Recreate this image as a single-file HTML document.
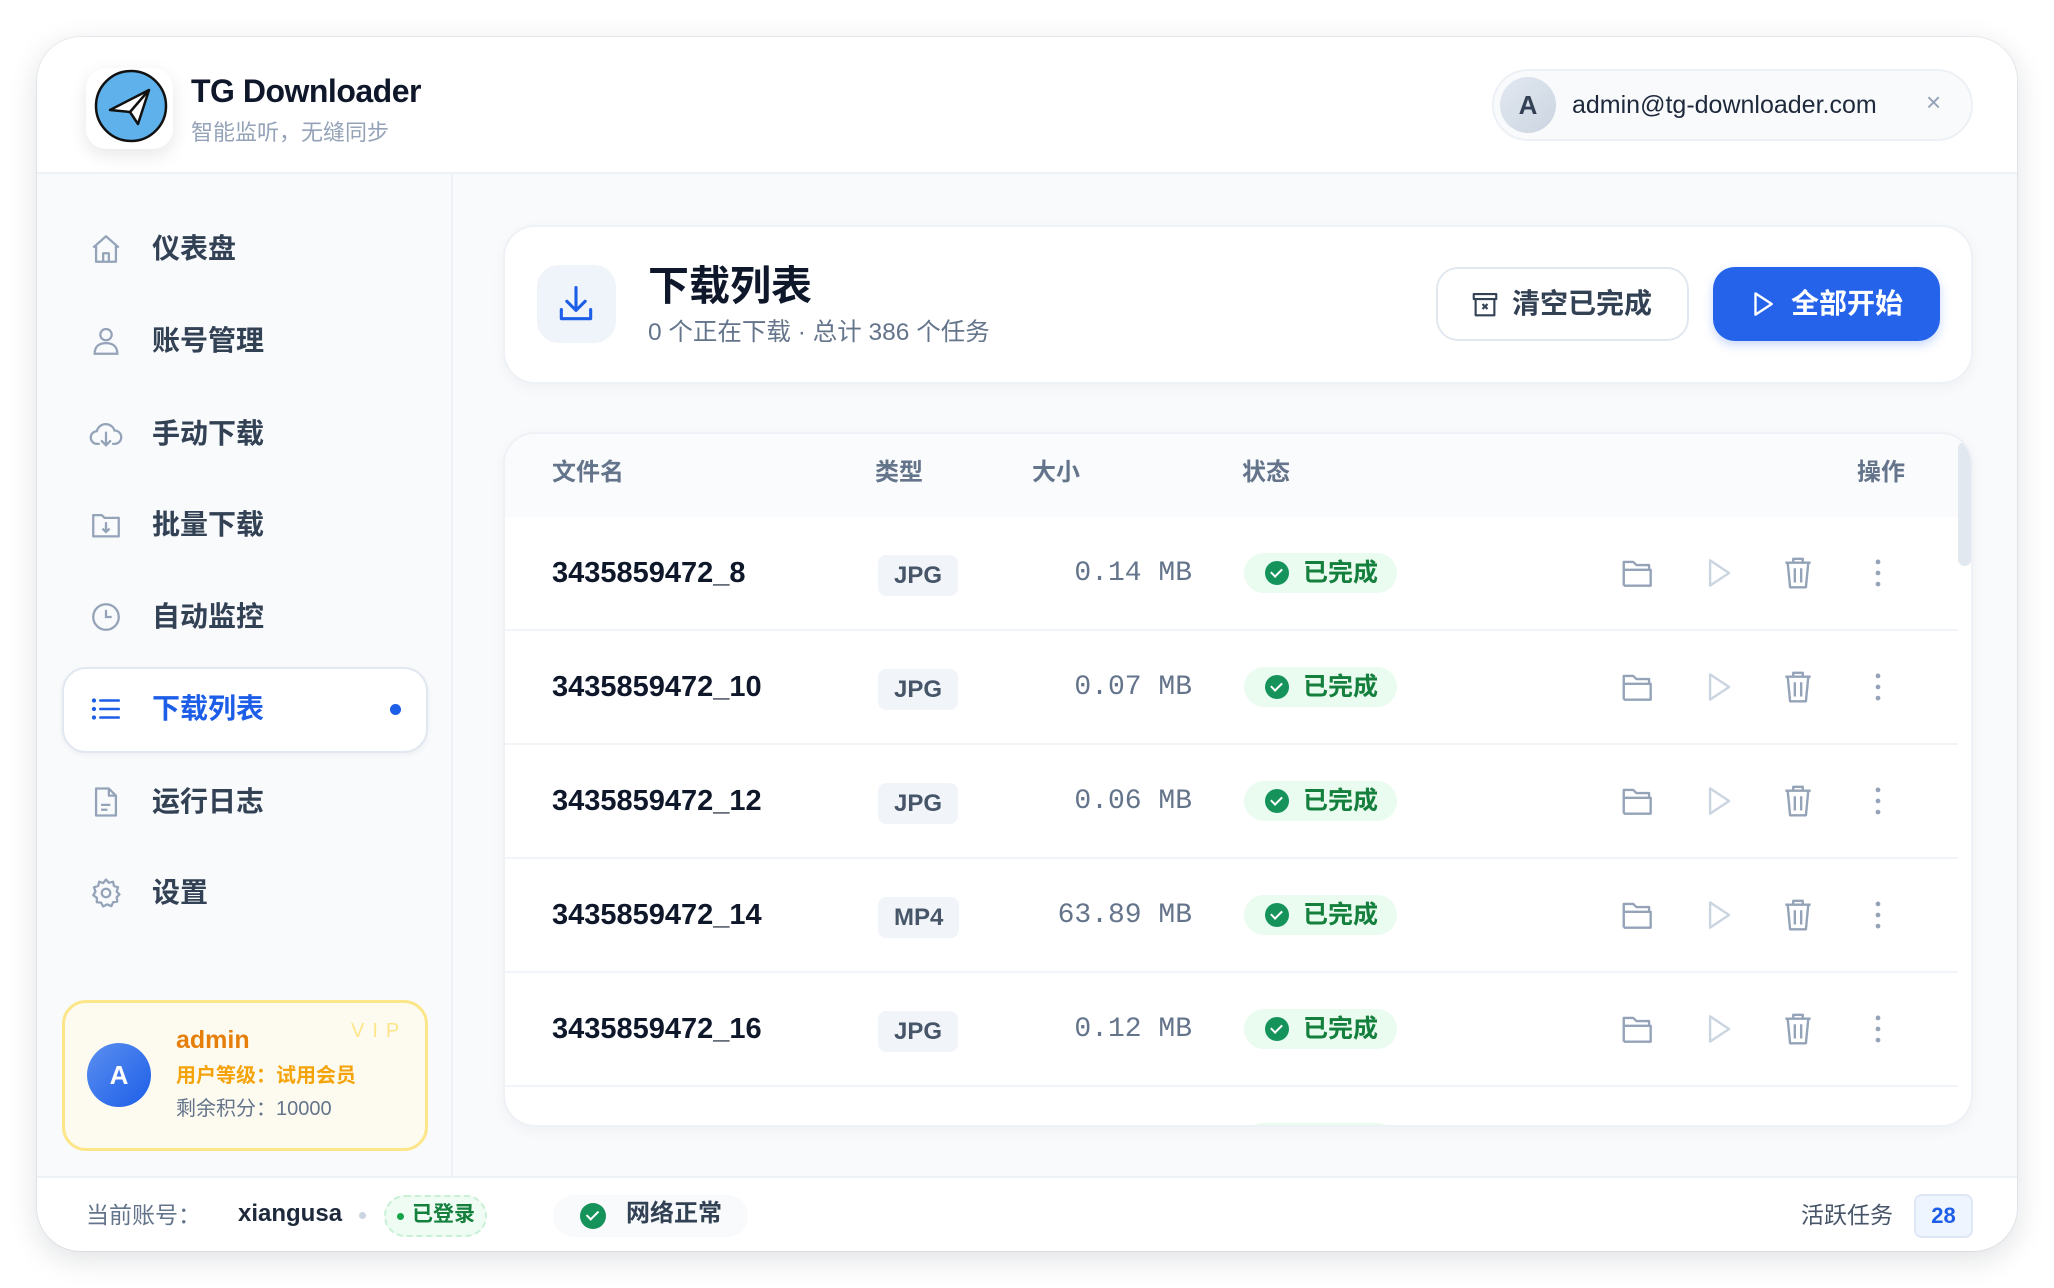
<!DOCTYPE html>
<html><head><meta charset="utf-8">
<style>
*{margin:0;padding:0;box-sizing:border-box}
body{width:2054px;height:1288px;background:#fff;position:relative;overflow:hidden;font-family:"Liberation Sans","Noto Sans CJK SC",sans-serif;color:#0f172a}
.abs{position:absolute}
.win{left:37px;top:37px;width:1980px;height:1214px;border-radius:44px;background:#f8fafc;box-shadow:0 8px 30px rgba(15,23,42,.13),0 0 0 1px #eef1f5;overflow:hidden}
.hdr{left:0;top:0;width:1980px;height:137px;background:#fff;border-bottom:2px solid #eef1f5}
.side{left:0;top:137px;width:416px;height:1002px;background:#f8fafc;border-right:2px solid #eef1f5}
.nav{position:absolute;left:0;width:416px;height:60px;display:flex;align-items:center}
.nav svg{position:absolute;left:52px;width:34px;height:34px}
.nav span{position:absolute;left:115px;font-size:28px;font-weight:700;color:#334155;line-height:1}
.foot{left:0;top:1139px;width:1980px;height:75px;background:#fff;border-top:2px solid #eef1f5}
.card{background:#fff;border:2px solid #eef1f5;border-radius:32px;box-shadow:0 4px 14px rgba(15,23,42,.04)}
.th{position:absolute;top:423px;font-size:24px;font-weight:700;color:#64748b;line-height:26px}
.row{position:absolute;left:0;width:1453px;height:114px;border-bottom:2px solid #f1f4f8}
.fn{position:absolute;left:47px;top:40px;font-size:29px;font-weight:600;color:#0f172a;line-height:32px}
.badge{position:absolute;left:373px;top:38px;height:41px;padding:0 16px;background:#f1f5f9;border-radius:8px;font-size:24px;font-weight:600;color:#475569;line-height:41px}
.sz{position:absolute;right:766px;top:40px;font-family:"Liberation Mono",monospace;font-size:28px;color:#64748b;line-height:34px}
.st{position:absolute;left:739px;top:36px;width:153px;height:40px;border-radius:20px;background:#eafbf0}
.st i{position:absolute;left:21px;top:8px;width:24px;height:24px;border-radius:50%;background:#15935a}
.st i:after{content:"";position:absolute;left:8px;top:5px;width:5px;height:9px;border:solid #fff;border-width:0 2px 2px 0;transform:rotate(45deg)}
.st span{position:absolute;left:59px;top:6px;font-size:25px;font-weight:600;color:#15803d;line-height:28px}
.ic{position:absolute;top:37px;width:38px;height:38px}
</style></head><body>
<div class="abs win">
 <div class="abs hdr">
  <div class="abs" style="left:49px;top:31px;width:87px;height:81px;background:#fff;border-radius:20px;box-shadow:0 6px 18px rgba(15,23,42,.1)"></div>
  <svg class="abs" style="left:56px;top:31px" width="76" height="76" viewBox="0 0 76 76"><circle cx="38" cy="38" r="35" fill="#5eb1ea" stroke="#111" stroke-width="2.5"/><path d="M17 42 L56 22 L45 56 L37 44 Z" fill="#fff" stroke="#111" stroke-width="2.5" stroke-linejoin="round"/><path d="M37 44 L56 22" stroke="#111" stroke-width="2.5"/></svg>
  <div class="abs" style="left:154px;top:36px;font-size:32px;font-weight:700;letter-spacing:-0.5px;color:#0f172a">TG Downloader</div>
  <div class="abs" style="left:154px;top:78px;font-size:22px;color:#94a3b8">智能监听，无缝同步</div>
  <div class="abs" style="left:1455px;top:32px;width:481px;height:72px;border-radius:36px;background:#f8fafc;border:2px solid #edf1f6"></div>
  <div class="abs" style="left:1463px;top:40px;width:56px;height:56px;border-radius:50%;background:linear-gradient(135deg,#e2e8f0,#cbd5e1);text-align:center;line-height:56px;font-size:26px;font-weight:700;color:#334155">A</div>
  <div class="abs" style="left:1535px;top:54px;font-size:25px;color:#1e293b;line-height:28px">admin@tg-downloader.com</div>
  <div class="abs" style="left:1889px;top:50px;font-size:26px;color:#94a3b8">×</div>
 </div>
 <div class="abs side">
  <div class="nav" style="top:45px"><svg viewBox="0 0 24 24" fill="none" stroke="#94a3b8" stroke-width="1.6" stroke-linejoin="round"><path d="M3 11 L12 3 L21 11 M5 9.5 V21 H19 V9.5 M10 21 V15 H14 V21"/></svg><span>仪表盘</span></div>
  <div class="nav" style="top:137px"><svg viewBox="0 0 24 24" fill="none" stroke="#94a3b8" stroke-width="1.6"><circle cx="12" cy="7.5" r="4"/><path d="M4 21 C4 15 8 13.5 12 13.5 C16 13.5 20 15 20 21 Z"/></svg><span>账号管理</span></div>
  <div class="nav" style="top:230px"><svg viewBox="0 0 24 24" fill="none" stroke="#94a3b8" stroke-width="1.6" stroke-linecap="round"><path d="M7 19 H6 A4.5 4.5 0 0 1 5.5 10 A6.5 6.5 0 0 1 18 9.5 A4.5 4.5 0 0 1 18 19 H17"/><path d="M12 11 V20 M9 17 L12 20 L15 17"/></svg><span>手动下载</span></div>
  <div class="nav" style="top:321px"><svg viewBox="0 0 24 24" fill="none" stroke="#94a3b8" stroke-width="1.6" stroke-linejoin="round"><path d="M3 5 H9 L11 7 H21 V20 H3 Z"/><path d="M12 10 V17 M9.5 14.5 L12 17 L14.5 14.5"/></svg><span>批量下载</span></div>
  <div class="nav" style="top:413px"><svg viewBox="0 0 24 24" fill="none" stroke="#94a3b8" stroke-width="1.6"><circle cx="12" cy="12" r="9"/><path d="M12 7 V12 H16"/></svg><span>自动监控</span></div>
  <div class="abs" style="left:25px;top:493px;width:366px;height:86px;background:#fff;border:2px solid #e2e8f0;border-radius:24px;box-shadow:0 2px 6px rgba(15,23,42,.05)"></div>
  <div class="nav" style="top:505px"><svg viewBox="0 0 24 24" fill="none" stroke="#1d5ee8" stroke-width="1.8" stroke-linecap="round"><path d="M8 6 H21 M8 12 H21 M8 18 H21"/><circle cx="3.5" cy="6" r=".6" fill="#1d5ee8"/><circle cx="3.5" cy="12" r=".6" fill="#1d5ee8"/><circle cx="3.5" cy="18" r=".6" fill="#1d5ee8"/></svg><span style="color:#1d5ee8">下载列表</span><div class="abs" style="left:353px;top:25px;width:11px;height:11px;border-radius:50%;background:#1d5ee8"></div></div>
  <div class="nav" style="top:598px"><svg viewBox="0 0 24 24" fill="none" stroke="#94a3b8" stroke-width="1.6" stroke-linejoin="round"><path d="M5 2.5 H14 L19 7.5 V21.5 H5 Z M14 2.5 V7.5 H19 M8.5 14 H15 M8.5 17.5 H13"/></svg><span>运行日志</span></div>
  <div class="nav" style="top:689px"><svg viewBox="0 0 24 24" fill="none" stroke="#94a3b8" stroke-width="1.6"><circle cx="12" cy="12" r="3"/><path d="M12 2.5 L14 4.8 L17 4 L17.6 7 L20.5 8 L19.5 11 L21.5 13 L19.5 15 L20 18 L17 18.5 L15.8 21.3 L12.8 20 L10 21.5 L8.5 18.8 L5.5 18.5 L5.6 15.5 L3 13.5 L4.6 11 L3.5 8 L6.5 7 L7.2 4 L10 5 Z" stroke-linejoin="round"/></svg><span>设置</span></div>
  <div class="abs" style="left:25px;top:826px;width:366px;height:151px;background:#fdfbf0;border:3px solid #fde68a;border-radius:24px"></div>
  <div class="abs" style="left:50px;top:869px;width:64px;height:64px;border-radius:50%;background:linear-gradient(135deg,#5b8ff0,#1d5ee8);color:#fff;font-size:26px;font-weight:700;text-align:center;line-height:64px">A</div>
  <div class="abs" style="left:139px;top:851px;font-size:25px;font-weight:600;color:#e67e0a;line-height:30px">admin</div>
  <div class="abs" style="left:314px;top:846px;font-size:20px;color:#fde68a;letter-spacing:8px">VIP</div>
  <div class="abs" style="left:139px;top:890px;font-size:20px;font-weight:700;color:#f5a30b;line-height:24px">用户等级：试用会员</div>
  <div class="abs" style="left:139px;top:923px;font-size:20px;color:#64748b;line-height:24px">剩余积分：10000</div>
 </div>
 <div class="abs card" style="left:466px;top:188px;width:1470px;height:159px"></div>
 <div class="abs" style="left:500px;top:228px;width:79px;height:78px;border-radius:22px;background:#eff4fa"></div>
 <svg class="abs" style="left:517px;top:245px" width="44" height="44" viewBox="0 0 24 24" fill="none" stroke="#1d5ee8" stroke-width="1.7" stroke-linecap="round" stroke-linejoin="round"><path d="M12 3 V15 M7 10.5 L12 15.5 L17 10.5 M4 15 V20 H20 V15"/></svg>
 <div class="abs" style="left:611px;top:225px;font-size:41px;font-weight:700;color:#0f172a;line-height:48px">下载列表</div>
 <div class="abs" style="left:611px;top:281px;font-size:24.5px;color:#64748b;line-height:30px">0 个正在下载 · 总计 386 个任务</div>
 <div class="abs" style="left:1399px;top:230px;width:253px;height:74px;border:2px solid #e2e8f0;border-radius:22px;background:#fff"></div>
 <svg class="abs" style="left:1433px;top:252px" width="30" height="30" viewBox="0 0 24 24" fill="none" stroke="#334155" stroke-width="1.7" stroke-linejoin="round"><path d="M3 4 H21 V8 H3 Z M4.5 8 V21 H19.5 V8 M10 12 L14 16 M14 12 L10 16"/></svg>
 <div class="abs" style="left:1475px;top:250px;font-size:28px;font-weight:700;color:#334155;line-height:34px">清空已完成</div>
 <div class="abs" style="left:1676px;top:230px;width:227px;height:74px;border-radius:22px;background:#2563eb;box-shadow:0 4px 10px rgba(37,99,235,.25)"></div>
 <svg class="abs" style="left:1711px;top:251px" width="30" height="32" viewBox="0 0 24 24" fill="none" stroke="#fff" stroke-width="1.9" stroke-linejoin="round"><path d="M6 3.5 L19 12 L6 20.5 Z"/></svg>
 <div class="abs" style="left:1754px;top:250px;font-size:28px;font-weight:700;color:#fff;line-height:34px">全部开始</div>
 <div class="abs card" style="left:466px;top:395px;width:1470px;height:695px;overflow:hidden">
  <div class="abs" style="left:0;top:0;width:1470px;height:83px;background:#fafbfc"></div>
  <div class="abs" style="left:1453px;top:8px;width:13px;height:124px;border-radius:7px;background:#e2e8f0"></div>
  <div class="abs" style="left:0;top:83px;width:1453px;height:620px">
   <div class="row" style="top:0"><div class="fn">3435859472_8</div><div class="badge">JPG</div><div class="sz">0.14 MB</div><div class="st"><i></i><span>已完成</span></div>
   <svg class="ic" style="left:1114px" viewBox="0 0 24 24" fill="none" stroke="#94a3b8" stroke-width="1.5" stroke-linejoin="round"><path d="M3 20 V5 H9 L11 7 H19 V10 M3 20 H20 V10 H3"/></svg>
   <svg class="ic" style="left:1194px" viewBox="0 0 24 24" fill="none" stroke="#cbd5e1" stroke-width="1.5" stroke-linejoin="round"><path d="M7 4 L19 12 L7 20 Z"/></svg>
   <svg class="ic" style="left:1274px" viewBox="0 0 24 24" fill="none" stroke="#94a3b8" stroke-width="1.5" stroke-linejoin="round"><path d="M4 5.5 H20 M9 5.5 V3 H15 V5.5 M5.5 5.5 L7 21 H17 L18.5 5.5 M10 9 V18 M14 9 V18"/></svg>
   <svg class="ic" style="left:1354px" viewBox="0 0 24 24" fill="#94a3b8"><circle cx="12" cy="5" r="1.5"/><circle cx="12" cy="12" r="1.5"/><circle cx="12" cy="19" r="1.5"/></svg></div>
   <div class="row" style="top:114px"><div class="fn">3435859472_10</div><div class="badge">JPG</div><div class="sz">0.07 MB</div><div class="st"><i></i><span>已完成</span></div>
   <svg class="ic" style="left:1114px" viewBox="0 0 24 24" fill="none" stroke="#94a3b8" stroke-width="1.5" stroke-linejoin="round"><path d="M3 20 V5 H9 L11 7 H19 V10 M3 20 H20 V10 H3"/></svg>
   <svg class="ic" style="left:1194px" viewBox="0 0 24 24" fill="none" stroke="#cbd5e1" stroke-width="1.5" stroke-linejoin="round"><path d="M7 4 L19 12 L7 20 Z"/></svg>
   <svg class="ic" style="left:1274px" viewBox="0 0 24 24" fill="none" stroke="#94a3b8" stroke-width="1.5" stroke-linejoin="round"><path d="M4 5.5 H20 M9 5.5 V3 H15 V5.5 M5.5 5.5 L7 21 H17 L18.5 5.5 M10 9 V18 M14 9 V18"/></svg>
   <svg class="ic" style="left:1354px" viewBox="0 0 24 24" fill="#94a3b8"><circle cx="12" cy="5" r="1.5"/><circle cx="12" cy="12" r="1.5"/><circle cx="12" cy="19" r="1.5"/></svg></div>
   <div class="row" style="top:228px"><div class="fn">3435859472_12</div><div class="badge">JPG</div><div class="sz">0.06 MB</div><div class="st"><i></i><span>已完成</span></div>
   <svg class="ic" style="left:1114px" viewBox="0 0 24 24" fill="none" stroke="#94a3b8" stroke-width="1.5" stroke-linejoin="round"><path d="M3 20 V5 H9 L11 7 H19 V10 M3 20 H20 V10 H3"/></svg>
   <svg class="ic" style="left:1194px" viewBox="0 0 24 24" fill="none" stroke="#cbd5e1" stroke-width="1.5" stroke-linejoin="round"><path d="M7 4 L19 12 L7 20 Z"/></svg>
   <svg class="ic" style="left:1274px" viewBox="0 0 24 24" fill="none" stroke="#94a3b8" stroke-width="1.5" stroke-linejoin="round"><path d="M4 5.5 H20 M9 5.5 V3 H15 V5.5 M5.5 5.5 L7 21 H17 L18.5 5.5 M10 9 V18 M14 9 V18"/></svg>
   <svg class="ic" style="left:1354px" viewBox="0 0 24 24" fill="#94a3b8"><circle cx="12" cy="5" r="1.5"/><circle cx="12" cy="12" r="1.5"/><circle cx="12" cy="19" r="1.5"/></svg></div>
   <div class="row" style="top:342px"><div class="fn">3435859472_14</div><div class="badge">MP4</div><div class="sz">63.89 MB</div><div class="st"><i></i><span>已完成</span></div>
   <svg class="ic" style="left:1114px" viewBox="0 0 24 24" fill="none" stroke="#94a3b8" stroke-width="1.5" stroke-linejoin="round"><path d="M3 20 V5 H9 L11 7 H19 V10 M3 20 H20 V10 H3"/></svg>
   <svg class="ic" style="left:1194px" viewBox="0 0 24 24" fill="none" stroke="#cbd5e1" stroke-width="1.5" stroke-linejoin="round"><path d="M7 4 L19 12 L7 20 Z"/></svg>
   <svg class="ic" style="left:1274px" viewBox="0 0 24 24" fill="none" stroke="#94a3b8" stroke-width="1.5" stroke-linejoin="round"><path d="M4 5.5 H20 M9 5.5 V3 H15 V5.5 M5.5 5.5 L7 21 H17 L18.5 5.5 M10 9 V18 M14 9 V18"/></svg>
   <svg class="ic" style="left:1354px" viewBox="0 0 24 24" fill="#94a3b8"><circle cx="12" cy="5" r="1.5"/><circle cx="12" cy="12" r="1.5"/><circle cx="12" cy="19" r="1.5"/></svg></div>
   <div class="row" style="top:456px"><div class="fn">3435859472_16</div><div class="badge">JPG</div><div class="sz">0.12 MB</div><div class="st"><i></i><span>已完成</span></div>
   <svg class="ic" style="left:1114px" viewBox="0 0 24 24" fill="none" stroke="#94a3b8" stroke-width="1.5" stroke-linejoin="round"><path d="M3 20 V5 H9 L11 7 H19 V10 M3 20 H20 V10 H3"/></svg>
   <svg class="ic" style="left:1194px" viewBox="0 0 24 24" fill="none" stroke="#cbd5e1" stroke-width="1.5" stroke-linejoin="round"><path d="M7 4 L19 12 L7 20 Z"/></svg>
   <svg class="ic" style="left:1274px" viewBox="0 0 24 24" fill="none" stroke="#94a3b8" stroke-width="1.5" stroke-linejoin="round"><path d="M4 5.5 H20 M9 5.5 V3 H15 V5.5 M5.5 5.5 L7 21 H17 L18.5 5.5 M10 9 V18 M14 9 V18"/></svg>
   <svg class="ic" style="left:1354px" viewBox="0 0 24 24" fill="#94a3b8"><circle cx="12" cy="5" r="1.5"/><circle cx="12" cy="12" r="1.5"/><circle cx="12" cy="19" r="1.5"/></svg></div>
   <div class="row" style="top:570px;border:0"><div class="st"><i></i><span>已完成</span></div></div>
  </div>
 </div>
 <div class="th" style="left:515px">文件名</div>
 <div class="th" style="left:838px">类型</div>
 <div class="th" style="left:995px">大小</div>
 <div class="th" style="left:1205px">状态</div>
 <div class="th" style="left:1820px">操作</div>
 <div class="abs foot">
  <div class="abs" style="left:49px;top:23px;font-size:23px;color:#64748b;line-height:28px">当前账号：</div>
  <div class="abs" style="left:201px;top:22px;font-size:24px;font-weight:600;color:#1e293b;line-height:28px">xiangusa</div>
  <div class="abs" style="left:322px;top:34px;width:7px;height:7px;border-radius:50%;background:#cbd5e1"></div>
  <div class="abs" style="left:347px;top:17px;width:103px;height:42px;border-radius:21px;background:#effcf3;border:2px dashed #c8f0d4"></div>
  <div class="abs" style="left:360px;top:35px;width:7px;height:7px;border-radius:50%;background:#16a34a"></div>
  <div class="abs" style="left:375px;top:24px;font-size:21px;font-weight:600;color:#15803d;line-height:26px">已登录</div>
  <div class="abs" style="left:516px;top:17px;width:195px;height:42px;border-radius:21px;background:#f8fafc"></div>
  <div class="abs" style="left:543px;top:25px;width:26px;height:26px;border-radius:50%;background:#15935a"></div>
  <div class="abs" style="left:552px;top:30px;width:7px;height:12px;border:solid #fff;border-width:0 2.5px 2.5px 0;transform:rotate(45deg)"></div>
  <div class="abs" style="left:589px;top:22px;font-size:24px;font-weight:600;color:#334155;line-height:28px">网络正常</div>
  <div class="abs" style="left:1764px;top:23px;font-size:23px;color:#475569;line-height:28px">活跃任务</div>
  <div class="abs" style="left:1877px;top:16px;width:59px;height:44px;border-radius:8px;background:#eff5ff;border:2px solid #dde7f5;text-align:center;line-height:40px;font-size:22px;font-weight:700;color:#1d5ee8">28</div>
 </div>
</div>
</body></html>
